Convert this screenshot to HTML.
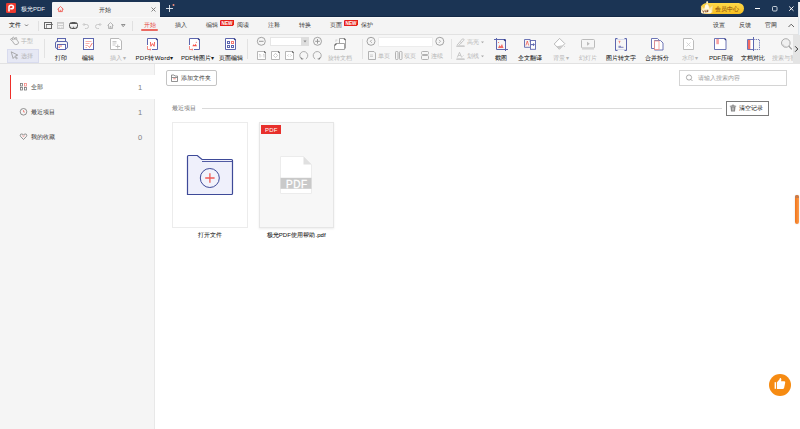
<!DOCTYPE html>
<html><head><meta charset="utf-8">
<style>
*{box-sizing:border-box}
html,body{margin:0;padding:0;width:800px;height:429px;overflow:hidden;background:#fff;font-family:"Liberation Sans",sans-serif;color:#222}
.a{position:absolute}
.t{position:absolute;font-size:6px;line-height:8px;white-space:nowrap;color:#333;-webkit-text-stroke:0}
.g{color:#b4b4b4}
.m{color:#3a3a3a}
.d{color:#1c1c1c;-webkit-text-stroke:0.06px #1c1c1c}
#ov{position:absolute;left:0;top:0;width:800px;height:429px;overflow:visible}
</style></head><body>
<!-- backgrounds -->
<div class="a" style="left:0;top:0;width:800px;height:17px;background:#1b3454"></div>
<div class="a" style="left:0;top:16px;width:798px;height:1px;background:#132845"></div>
<div class="a" style="left:52px;top:2px;width:108px;height:15px;background:#f4f4f4;border-radius:1px 1px 0 0"></div>
<div class="a" style="left:0;top:17px;width:798px;height:18px;background:#f4f4f4;border-bottom:1px solid #e2e2e2"></div>
<div class="a" style="left:0;top:17px;width:798px;height:1px;background:#fafafa"></div>
<div class="a" style="left:0;top:35px;width:798px;height:29px;background:#f6f6f6;border-bottom:1px solid #e2e2e2"></div>
<div class="a" style="left:798px;top:2px;width:2px;height:33px;background:#eef3f8;border-left:1px solid #dfe5ea"></div>
<div class="a" style="left:793px;top:35px;width:7px;height:29px;background:#e4e4e4"></div>
<div class="a" style="left:0;top:64px;width:155px;height:365px;background:#f5f5f5;border-right:1px solid #e8e8e8"></div>

<!-- title texts -->
<div class="t" style="left:21px;top:5px;color:#eef2f6">极光PDF</div>
<div class="t" style="left:99px;top:6px">开始</div>
<div class="a" style="left:701px;top:3px;width:43px;height:11px;border-radius:6px;background:linear-gradient(#ffd949,#f7bf20)"></div>
<div class="t" style="left:715px;top:5px;color:#8a4b0c;-webkit-text-stroke:0.05px">会员中心</div>

<!-- menu texts -->
<div class="t d" style="left:9px;top:21px">文件</div>
<div class="t" style="left:144px;top:21px;color:#e5463d">开始</div>
<div class="a" style="left:141px;top:29px;width:17px;height:2px;background:#ea6a62;border-radius:1px"></div>
<div class="t m" style="left:175px;top:21px">插入</div>
<div class="t m" style="left:206px;top:21px">编辑</div>
<svg class="a" style="left:220px;top:20px;position:absolute" width="14" height="6" viewBox="0 0 14 6"><path d="M0.8 0 H14 V4.6 L12.8 6 H0 V0.8 Z" fill="#e6201b"/><text x="7" y="5" text-anchor="middle" font-family="Liberation Sans" font-weight="bold" font-size="5.2" fill="#fff" textLength="11" lengthAdjust="spacingAndGlyphs">NEW</text></svg>
<div class="t m" style="left:237px;top:21px">阅读</div>
<div class="t m" style="left:268px;top:21px">注释</div>
<div class="t m" style="left:299px;top:21px">转换</div>
<div class="t m" style="left:330px;top:21px">页面</div>
<svg class="a" style="left:344px;top:20px;position:absolute" width="14" height="6" viewBox="0 0 14 6"><path d="M0.8 0 H14 V4.6 L12.8 6 H0 V0.8 Z" fill="#e6201b"/><text x="7" y="5" text-anchor="middle" font-family="Liberation Sans" font-weight="bold" font-size="5.2" fill="#fff" textLength="11" lengthAdjust="spacingAndGlyphs">NEW</text></svg>
<div class="t m" style="left:361px;top:21px">保护</div>
<div class="t m" style="left:713px;top:21px">设置</div>
<div class="t m" style="left:739px;top:21px">反馈</div>
<div class="t m" style="left:765px;top:21px">官网</div>

<!-- ribbon texts -->
<div class="a" style="left:7px;top:49px;width:32px;height:14px;background:#e6e8f4;border:1px solid #d8dbee"></div>
<div class="t g" style="left:21px;top:37px">手型</div>
<div class="t g" style="left:21px;top:52px">选择</div>
<div class="t d" style="left:55px;top:54px">打印</div>
<div class="t d" style="left:82px;top:54px">编辑</div>
<div class="t g" style="left:110px;top:54px">插入<span style="margin-left:0.8px">▾</span></div>
<div class="t d" style="left:135.5px;top:54px;letter-spacing:0.3px">PDF转Word▾</div>
<div class="t d" style="left:181px;top:54px">PDF转图片▾</div>
<div class="t d" style="left:219px;top:54px">页面编辑</div>
<div class="a" style="left:270px;top:37px;width:39px;height:9px;background:#fff;border:1px solid #e6e6e6"></div>
<div class="a" style="left:301px;top:37px;width:8px;height:9px;background:#dedede"></div>
<div class="t g" style="left:328px;top:54px">旋转文档</div>
<div class="a" style="left:378px;top:36.5px;width:55px;height:10px;background:#fff;border:1px solid #ececec;border-radius:1px"></div>
<div class="t g" style="left:378px;top:52px">单页</div>
<div class="t g" style="left:404px;top:52px">双页</div>
<div class="t g" style="left:431px;top:52px">连续</div>
<div class="t g" style="left:467px;top:38px">高亮</div>
<div class="t g" style="left:467px;top:52px">划线</div>
<div class="t d" style="left:495px;top:54px">截图</div>
<div class="t d" style="left:518px;top:54px">全文翻译</div>
<div class="t g" style="left:553px;top:54px">背景<span style="margin-left:0.8px">▾</span></div>
<div class="t g" style="left:579px;top:54px">幻灯片</div>
<div class="t d" style="left:606px;top:54px">图片转文字</div>
<div class="t d" style="left:645px;top:54px">合并拆分</div>
<div class="t g" style="left:682px;top:54px">水印<span style="margin-left:1px">▾</span></div>
<div class="t d" style="left:709px;top:54px">PDF压缩</div>
<div class="t d" style="left:741px;top:54px">文档对比</div>
<div class="t g" style="left:772px;top:54px;width:21px;overflow:hidden">搜索与替换</div>

<!-- sidebar -->
<div class="a" style="left:10px;top:75px;width:146px;height:24px;background:#fff;border-left:1.5px solid #ee2f2a"></div>
<div class="t" style="left:31px;top:83px">全部</div>
<div class="t" style="left:31px;top:108px">最近项目</div>
<div class="t" style="left:31px;top:133px">我的收藏</div>
<div class="t" style="left:138px;top:84px;color:#808080;font-size:7.5px">1</div>
<div class="t" style="left:138px;top:109px;color:#808080;font-size:7.5px">1</div>
<div class="t" style="left:138px;top:134px;color:#808080;font-size:7.5px">0</div>

<!-- main -->
<div class="a" style="left:166px;top:70px;width:51px;height:16px;border:1px solid #c4c4c4;border-radius:2px"></div>
<div class="t" style="left:181px;top:74px;color:#3a3a3a;-webkit-text-stroke:0">添加文件夹</div>
<div class="a" style="left:679px;top:70px;width:108px;height:16px;border:1px solid #d4d4d4"></div>
<div class="t" style="left:698px;top:74px;color:#9a9a9a;-webkit-text-stroke:0">请输入搜索内容</div>
<div class="t" style="left:172px;top:104px;color:#777;-webkit-text-stroke:0">最近项目</div>
<div class="a" style="left:202px;top:108px;width:520px;height:1px;background:#dadada"></div>
<div class="a" style="left:726px;top:101px;width:43px;height:15px;border:1px solid #7a7a7a"></div>
<div class="t" style="left:739px;top:104px;color:#333;-webkit-text-stroke:0.05px">清空记录</div>

<div class="a" style="left:172px;top:122px;width:76px;height:106px;border:1px solid #ececec;background:#fff"></div>
<div class="a" style="left:259px;top:122px;width:75px;height:106px;border:1px solid #e6e6e6;background:#f7f7f7;box-shadow:0 1px 2px rgba(0,0,0,0.08)"></div>
<div class="a" style="left:261px;top:125px;width:20px;height:9px;background:#e8302c"></div>
<div class="t" style="left:265px;top:125.5px;color:#fff;font-size:6px;letter-spacing:0.2px">PDF</div>
<div class="t d" style="left:198px;top:231px">打开文件</div>
<div class="t d" style="left:266.5px;top:231px;letter-spacing:0.1px">极光PDF使用帮助.pdf</div>

<div class="a" style="left:769px;top:374px;width:22px;height:22px;border-radius:50%;background:#f68b12"></div>
<div class="a" style="left:795px;top:195px;width:4px;height:29px;border-radius:2px;background:linear-gradient(90deg,#f0741a,#fb9a4a);box-shadow:0 0 2px rgba(0,0,0,0.15)"></div><div class="a" style="left:795px;top:195px;width:4px;height:3px;border-radius:2px 2px 0 0;background:#c87a4a"></div>

<svg id="ov" viewBox="0 0 800 429" fill="none" stroke-width="1">
<!-- logo -->
<rect x="6" y="3" width="10" height="10" rx="1.2" fill="#ec3a2f"/>
<path d="M9 11.5 V7 Q9 5.2 11.2 5.2 Q13.4 5.2 13.4 7 Q13.4 8.8 11.2 8.8 H10.2" stroke="#fff" stroke-width="1.6"/>
<!-- tab home -->
<path d="M57.4 9.4 L60.5 6.5 L63.6 9.4 M58.6 8.5 V11.6 H62.4 V8.5" stroke="#ee4a40" stroke-width="0.75"/><path d="M60.1 11.6 V10.2 H60.9 V11.6" stroke="#ee4a40" stroke-width="0.6"/>
<path d="M151.5 7.5 L155.5 11.5 M155.5 7.5 L151.5 11.5" stroke="#777" stroke-width="0.9"/>
<path d="M166 8.5 H173 M169.5 5 V12" stroke="#f0f3f7" stroke-width="0.85"/>
<circle cx="173.5" cy="5" r="1" fill="#f4907e"/>
<!-- window controls -->
<path d="M755 8.5 H760" stroke="#fff"/>
<rect x="772.5" y="6.5" width="4.5" height="4.5" rx="1" stroke="#eef2f6" stroke-width="0.8"/>
<path d="M789.2 6.5 L793.5 10.8 M793.5 6.5 L789.2 10.8" stroke="#fff"/>
<!-- crown -->
<path d="M701.6 12.8 L701.3 5.8 L704.2 8.2 L707.2 1.8 L709.8 7.6 L713 5 L712.4 12.8 Z" fill="#fbe7a2" stroke="#f2c34a" stroke-width="0.5"/>
<circle cx="707.2" cy="2.2" r="1" fill="#fff2c0"/>
<path d="M705 5.5 Q707 3.5 708.5 6 L709 9 H704.5 Z" fill="#fff9e6"/>
<rect x="701" y="9.6" width="10.5" height="3.8" rx="1.6" fill="#fff6dc"/>
<path d="M702.6 10.4 L703.5 12.4 L704.4 10.4 M705.6 10.4 V12.4 M706.9 12.4 V10.4 H708 Q708.9 10.8 708 11.5 H706.9" stroke="#7a3a0c" stroke-width="0.75"/>
<!-- menu row -->
<path d="M25 24.5 L26.5 26 L28 24.5" stroke="#555" stroke-width="0.8"/>
<path d="M38.5 21 V31 M132.5 21 V31" stroke="#e0e0e0"/>
<rect x="44.5" y="22.5" width="7" height="6" stroke="#666" stroke-width="1"/>
<path d="M46 24.5 H52.8" stroke="#666" stroke-width="1"/>
<path d="M46.5 25 V28" stroke="#666" stroke-width="0.7"/>
<rect x="57.5" y="22.5" width="6" height="6" stroke="#c9c9c9" stroke-width="1"/>
<path d="M58 23.3 H63 M58 25.5 H63" stroke="#cfcfcf" stroke-width="1"/>
<path d="M58.5 27.3 H59.8 M61.2 27.3 H62.5" stroke="#cfcfcf" stroke-width="1"/>
<rect x="69.5" y="22.5" width="8" height="6" rx="2.2" stroke="#555" stroke-width="1"/>
<path d="M70 23.5 H77 M70 27.3 H71.3 M72.7 27.3 H74.3 M75.7 27.3 H77" stroke="#555" stroke-width="1.1"/>
<path d="M84.5 23 L83 24.5 L84.5 26 M83.5 24.5 H86.5 Q88.5 24.5 88.5 26.5 Q88.5 28.5 86.5 28.5 H85" stroke="#c4c4c4" stroke-width="0.9"/>
<path d="M99.5 23 L101 24.5 L99.5 26 M100.5 24.5 H97.5 Q95.5 24.5 95.5 26.5 Q95.5 28.5 97.5 28.5 H99" stroke="#c4c4c4" stroke-width="0.9"/>
<path d="M107.5 25.5 L110.5 22.5 L113.5 25.5 M108.5 24.5 V28.5 H112.5 V24.5 M110 28.5 V26.5 H111 V28.5" stroke="#aaa" stroke-width="0.8"/>
<path d="M121.5 24.5 H125 L123.2 26.7 Z" stroke="#777" stroke-width="0.8"/>

<!-- ribbon: hand / select -->
<path d="M12.6 41.2 L10.8 39.9 Q10.2 39.1 11 38.6 Q11.5 38.4 12 38.8 L13.2 39.8 L12.6 37.9 Q12.6 37.1 13.4 37.1 Q13.9 37.2 14.1 37.7 L15 39.6 L15.3 38 Q15.6 37.3 16.3 37.5 Q16.8 37.8 16.7 38.4 L16.8 40.2 Q18.7 41.3 18.5 42.9 Q18 44.7 15.6 44.6 Q13.8 44.4 12.6 41.2 Z" stroke="#9a9a9a" stroke-width="0.8"/>
<path d="M11.2 51.8 L17.8 55.1 L15.3 55.9 L17.4 58.3 L16.6 59 L14.6 56.7 L13.1 58.5 Z" stroke="#9a9a9a" stroke-width="0.8"/>
<path d="M44.5 39 V58" stroke="#e2e2e2"/>
<!-- print -->
<rect x="57.5" y="38.5" width="8" height="3" stroke="#5d66ae"/>
<rect x="55.5" y="41.5" width="12" height="7" rx="1.5" stroke="#5d66ae"/>
<rect x="57.5" y="44.5" width="8" height="5" fill="#fff" stroke="#5d66ae"/>
<path d="M58.5 46 H62 M58.5 47.5 H60" stroke="#f26a62" stroke-width="0.8"/>
<!-- edit -->
<rect x="83.5" y="38.5" width="10" height="11" fill="#fff" stroke="#5d66ae"/>
<path d="M85.5 41.5 H91.5 M85.5 43.5 H89.5 M85.5 45.5 H88 M85.5 47.5 H87" stroke="#f47a72" stroke-width="0.6"/>
<path d="M88.3 46.2 L89.6 47.4 L92.3 43" stroke="#f26a62" stroke-width="0.9"/>
<!-- insert (gray) -->
<path d="M110.5 38.5 H119 L121.5 41 V49.5 H110.5 Z" fill="#fff" stroke="#b8b8b8"/>
<path d="M112.5 41.5 H116.5 M112.5 43 H116.5 M112.5 45 H115.5" stroke="#c8c8c8" stroke-width="1"/>
<path d="M115.5 46.5 H120 M117.7 44.5 V48.5" stroke="#b8b8b8" stroke-width="0.9"/>
<!-- pdf to word -->
<path d="M147.5 38.5 H156 L157.5 40 V49.5 H147.5 Z" fill="#fff"/>
<path d="M147.5 45 V38.5 H156 L157.5 40 V49.5 H152" stroke="#5d66ae"/>
<path d="M156 38.5 L157.5 40" stroke="#2a3380" stroke-width="1.3"/>
<path d="M150.4 42 L150.9 46.3 L152.5 43.6 L154.1 46.3 L154.6 42" stroke="#f5524a" stroke-width="0.9"/>
<path d="M147.5 46 V49.5 H151" stroke="#f47a72" stroke-width="0.9"/>
<path d="M149.8 50.6 L151 49.5 L149.8 48.4" stroke="#f47a72" stroke-width="0.6"/>
<!-- pdf to image -->
<path d="M189.5 38.5 H198 L199.5 40 V49.5 H189.5 Z" fill="#fff"/>
<path d="M189.5 45 V38.5 H198 L199.5 40 V49.5 H194" stroke="#5d66ae"/>
<path d="M198 38.5 L199.5 40" stroke="#2a3380" stroke-width="1.3"/>
<path d="M192.3 46.2 L193.5 44.2 L194.6 45.3 L195.6 43.8 L197 46.2 Z" fill="#f5524a"/>
<circle cx="196.3" cy="42.3" r="0.55" fill="#f5524a"/>
<path d="M189.5 46 V49.5 H193" stroke="#f47a72" stroke-width="0.9"/>
<path d="M191.8 50.6 L193 49.5 L191.8 48.4" stroke="#f47a72" stroke-width="0.6"/>
<!-- page edit -->
<path d="M225.5 38.5 H234 L235.5 40 V49.5 H225.5 Z" fill="#fff" stroke="#5d66ae"/>
<path d="M234 38.5 L235.5 40" stroke="#2a3380" stroke-width="1.3"/>
<rect x="227" y="41" width="3" height="3" fill="#5d66ae"/><rect x="228" y="42" width="1" height="1" fill="#fff"/>
<rect x="231" y="41" width="3" height="3" fill="#f47a72"/><rect x="232" y="42" width="1" height="1" fill="#fff"/>
<rect x="227" y="45" width="3" height="3" fill="#5d66ae"/><rect x="228" y="46" width="1" height="1" fill="#fff"/>
<rect x="231" y="45" width="3" height="3" fill="#5d66ae"/><rect x="232" y="46" width="1" height="1" fill="#fff"/>
<path d="M247.5 39 V59" stroke="#e2e2e2"/>
<!-- zoom controls -->
<circle cx="261.3" cy="41.3" r="4" stroke="#999" stroke-width="0.9"/>
<path d="M259 41.3 H263.6" stroke="#999"/>
<path d="M303.5 40.5 H306.5 L305 42.5 Z" fill="#888"/>
<circle cx="317.5" cy="41.3" r="4" stroke="#999" stroke-width="0.9"/>
<path d="M315.2 41.3 H319.8 M317.5 39 V43.6" stroke="#999"/>
<g stroke="#a4a4a4" stroke-width="0.8" fill="#fff">
<path d="M257.5 51.5 H264.3 L265.5 52.7 V59.5 H257.5 Z"/>
<path d="M271.5 51.5 H278.3 L279.5 52.7 V59.5 H271.5 Z"/>
<path d="M285.5 51.5 H292.3 L293.5 52.7 V59.5 H285.5 Z"/>
</g>
<path d="M264.2 51.5 L265.5 52.8 M278.2 51.5 L279.5 52.8 M292.2 51.5 L293.5 52.8" stroke="#555" stroke-width="1.1"/>
<path d="M259.3 54.5 L260 54 V57.5 M263.3 54.5 L264 54 V57.5" stroke="#b8b8b8" stroke-width="0.7"/>
<path d="M261.8 55 V55.4 M261.8 56.6 V57" stroke="#b8b8b8" stroke-width="0.6"/>
<path d="M275.5 53.3 L277.5 55.5 L275.5 57.7 L273.5 55.5 Z" stroke="#b4b4b4" stroke-width="0.7"/>
<path d="M288.6 54.5 L287.6 55.5 L288.6 56.5 M290.4 54.5 L291.4 55.5 L290.4 56.5" stroke="#b4b4b4" stroke-width="0.7"/>
<path d="M301.6 58.9 A4 4 0 1 1 305.8 59" stroke="#999" stroke-width="0.8"/>
<path d="M301 57.4 L301.6 59.1 L303.3 58.8" stroke="#666" stroke-width="0.8"/>
<path d="M319.4 58.9 A4 4 0 1 0 315.2 59" stroke="#999" stroke-width="0.8"/>
<path d="M320 57.4 L319.4 59.1 L317.7 58.8" stroke="#666" stroke-width="0.8"/>
<!-- rotate doc -->
<path d="M339.5 43.5 V38.5 H344 L345.5 40 V48.5" fill="#fff" stroke="#9a9a9a" stroke-width="0.9"/>
<path d="M344 38.5 L345.5 40" stroke="#666" stroke-width="1.2"/>
<path d="M336.5 43.5 H344.5 V49.5 H334.5 V45.5 Z" fill="#fff" stroke="#9a9a9a" stroke-width="0.9"/>
<path d="M334.5 45.5 L336.5 43.5" stroke="#666" stroke-width="1.2"/>
<path d="M335.8 42 V39.5 M336.8 39.2 V41" stroke="#c8c8c8" stroke-width="0.6"/>
<path d="M362.5 39 V59" stroke="#e2e2e2"/>
<!-- page nav -->
<circle cx="371" cy="41.3" r="4" stroke="#999" stroke-width="0.9"/>
<path d="M371.8 39.8 L370.3 41.3 L371.8 42.8" stroke="#999" stroke-width="0.8"/>
<circle cx="439.8" cy="41.3" r="4" stroke="#999" stroke-width="0.9"/>
<path d="M439 39.8 L440.5 41.3 L439 42.8" stroke="#999" stroke-width="0.8"/>
<path d="M368.5 51.5 H374 L375.5 53 V59.5 H368.5 Z" stroke="#aaa" stroke-width="0.9"/>
<path d="M370 55 H373 M370 56.5 H373" stroke="#bbb" stroke-width="0.6"/>
<rect x="395.5" y="51.5" width="2.5" height="8" rx="0.8" stroke="#aaa" stroke-width="0.9"/>
<rect x="399.5" y="51.5" width="2.5" height="8" rx="0.8" stroke="#aaa" stroke-width="0.9"/>
<rect x="421.5" y="51.5" width="7" height="3" rx="1" stroke="#aaa" stroke-width="0.9"/>
<rect x="421.5" y="55.5" width="7" height="4" rx="1" stroke="#aaa" stroke-width="0.9"/>
<path d="M451.5 39 V59" stroke="#e2e2e2"/>
<!-- highlight / underline -->
<path d="M457.2 45 L462.3 39 Q463 38.3 463.7 39 Q464.4 39.7 463.7 40.4 L459 45.2" stroke="#b9b9b9" stroke-width="0.8"/>
<path d="M460 41.5 L461.8 43.1" stroke="#b9b9b9" stroke-width="0.6"/>
<rect x="456.2" y="45.3" width="8.6" height="1.8" rx="0.9" fill="#cdcdcd"/>
<path d="M457.3 57.5 L459.5 52.3 L461.7 57.5" stroke="#bdbdbd" stroke-width="0.8"/>
<path d="M458.2 55.5 H460.8 M462.5 56.5 L463.5 55.5" stroke="#bdbdbd" stroke-width="0.7"/>
<rect x="456.2" y="58.3" width="8.6" height="1.8" rx="0.9" fill="#cdcdcd"/>
<path d="M481 41.5 H484 L482.5 43.2 Z M481 55.5 H484 L482.5 57.2 Z" fill="#aaa"/>
<!-- screenshot -->
<path d="M494 39.5 H505.5 V51 M496.5 38 V49.5 H508" stroke="#5d66ae"/>
<path d="M504 39.5 L505.5 41" stroke="#28307a" stroke-width="1.2"/>
<path d="M498 48 L499.5 45 L500.5 46.5 L502 44 L503.5 48 Z" fill="#f26a62"/>
<circle cx="498.5" cy="42.5" r="0.6" fill="#f26a62"/>
<!-- translate -->
<rect x="530.5" y="40.5" width="5" height="8.8" fill="#fff" stroke="#5d66ae" stroke-width="0.9"/>
<path d="M530 47.3 H524.5 V39.5 H530.2 V42" stroke="#5d66ae" stroke-width="0.9"/>
<path d="M525.9 45.5 L527.3 41 L528.7 45.5" stroke="#f04a40" stroke-width="0.7"/>
<path d="M530.8 44.6 H534" stroke="#5d66ae" stroke-width="1.1"/>
<path d="M533 43 L535 44.6 L533 46.2 Z" fill="#5d66ae"/>
<!-- background -->
<path d="M554.2 44 L559.6 38.4 L564.8 43.6 L559.4 49.3 Z" fill="#fff" stroke="#aaa" stroke-width="0.8"/>
<path d="M556.5 46.3 L563.2 45.2 L559.4 49 Z" fill="#c9c9c9"/>
<circle cx="564.6" cy="46.6" r="0.45" fill="#999"/>
<!-- slides -->
<rect x="581.5" y="39.5" width="13" height="8.5" rx="1" stroke="#bbb"/>
<path d="M587 41.8 V45.7 L589.8 43.75 Z" fill="#bbb"/>
<path d="M582 49 H594" stroke="#ccc" stroke-width="1"/>
<!-- image to text -->
<path d="M617.5 38.5 H615.5 V50.5 H617.5 M624.5 38.5 H626.5 V50.5 H624.5" stroke="#5d66ae" stroke-width="1"/>
<path d="M616 39.5 H626 M616 49.5 H626" stroke="#c5c9e6" stroke-width="0.6"/>
<path d="M618.5 41.3 H620.5 M619.5 41.3 V43.3" stroke="#f26a62" stroke-width="0.7"/>
<path d="M618.5 46.3 H621 M618.5 47.3 H623.5" stroke="#5d66ae" stroke-width="0.8"/>
<!-- merge split -->
<path d="M651.5 38.5 H657.5 L660 41 V48.5 H651.5 Z" fill="#fff" stroke="#5d66ae" stroke-width="0.9"/>
<path d="M654.5 40.5 H660.5 L663 43 V50 H654.5 Z" fill="#fff" stroke="#5d66ae" stroke-width="0.9"/>
<rect x="654.5" y="41" width="4.5" height="8.5" stroke="#f79790" stroke-width="0.8"/>
<!-- watermark -->
<path d="M683.5 38.5 H691.5 L693.5 40.5 V49.5 H683.5 Z" fill="#fff" stroke="#b4b4b4" stroke-width="0.9"/>
<path d="M686.5 42.5 L690.5 46.5 M690.5 42.5 L686.5 46.5" stroke="#ccc" stroke-width="0.8"/>
<!-- pdf compress -->
<path d="M714.5 38.5 H724.5 L726 40 V49.5 H714.5 Z" fill="#fff" stroke="#5d66ae" stroke-width="0.9"/>
<path d="M724.5 38.5 L726 40" stroke="#2a3380" stroke-width="1.2"/>
<rect x="716.3" y="39" width="2.6" height="5.2" fill="#f8a0a0"/>
<!-- compare -->
<path d="M753.5 39.5 H747.5 V49.5 H753.5" fill="#fff" stroke="#5d66ae" stroke-width="0.9"/>
<rect x="748" y="40" width="2.3" height="9" fill="#f26a62"/>
<path d="M753.5 39.5 H759.5 V49.5 H753.5" stroke="#5d66ae" stroke-width="0.9" stroke-dasharray="1.2 1"/>
<path d="M753.5 37 V51" stroke="#5d66ae" stroke-width="1"/>
<!-- search -->
<circle cx="785.8" cy="43" r="4.3" fill="#f0f0f0" stroke="#aaa" stroke-width="1"/>
<path d="M782.5 44 Q783 46.5 786 46.8" stroke="#ccc" stroke-width="1.2"/>
<path d="M788.8 46.2 L791.8 49.4" stroke="#999" stroke-width="1.2"/>
<path d="M795.2 46.3 L797.8 49 L795.2 51.7" stroke="#333" stroke-width="1"/>
<!-- menu right chevron -->
<path d="M788.5 27 L791.2 24.2 L794 27" stroke="#555" stroke-width="0.9"/>

<!-- sidebar icons -->
<g stroke="#777" stroke-width="0.8">
<rect x="20.5" y="83.5" width="2" height="2.5"/>
<rect x="20.5" y="87.5" width="2" height="2.5"/>
<rect x="24.5" y="87.5" width="2" height="2.5"/>
</g>
<rect x="24.5" y="83.5" width="2" height="2.5" stroke="#f58a84" stroke-width="0.8"/>
<circle cx="23.5" cy="111.8" r="3.3" stroke="#777" stroke-width="0.8"/>
<path d="M23.5 110 V112 H25" stroke="#f26a62" stroke-width="0.7"/>
<path d="M23.5 139.5 L20.6 136.5 Q19.8 135.3 20.6 134.3 Q21.8 133.3 23.5 134.8 Q25.2 133.3 26.4 134.3 Q27.2 135.3 26.4 136.5 Z" stroke="#777" stroke-width="0.8"/>

<path d="M22.3 135.6 L23.5 136.5 L24.7 135.6" stroke="#f47a72" stroke-width="0.7"/>
<!-- add folder icon -->
<path d="M171.5 81.5 V75 H174 L175 76 H177.5 V81.5 Z M171.5 77.5 H177.5" stroke="#777" stroke-width="0.8"/>
<path d="M173.3 78.8 H175.7" stroke="#f26a62" stroke-width="0.8"/>
<!-- search icon -->
<circle cx="689" cy="77.5" r="2.6" stroke="#8a8a8a" stroke-width="0.7"/>
<path d="M690.8 79.3 L692.5 81" stroke="#8a8a8a" stroke-width="0.7"/>
<!-- trash -->
<path d="M729.8 106.2 H736.2 M732 106 V105.2 H734 V106" stroke="#777" stroke-width="0.8"/><path d="M730.5 106.5 H735.5 L735 111.6 H731 Z" fill="#888"/><path d="M733 107.5 V110.5" stroke="#fff" stroke-width="0.8"/>

<!-- open file card folder -->
<path d="M187.5 194.5 V156.5 Q187.5 155.5 188.5 155.5 H197.3 L202 159.5 H231.5 Q232.5 159.5 232.5 160.5 V193.5 Q232.5 194.5 231.5 194.5 Z" fill="#eff0fb" stroke="#3e4a98" stroke-width="1.2"/>
<path d="M202 161.5 H232" stroke="#3e4a98" stroke-width="0.9"/>
<circle cx="209.8" cy="178" r="9.5" fill="#f2f3fc" stroke="#3e4a98" stroke-width="1"/>
<path d="M205.2 178 H214.6 M209.9 173.2 V182.8" stroke="#ef5b55" stroke-width="1.3"/>

<!-- pdf doc card -->
<path d="M280.5 156.5 H303.5 L311.5 164.5 V193.5 H280.5 Z" fill="#fff" stroke="#ececec" stroke-width="1"/>
<path d="M303.5 156.5 V164.5 H311.5 Z" fill="#e0e0e0"/>
<rect x="280.5" y="177.8" width="31" height="11" fill="#c9c9c9"/>

<!-- thumbs up -->
<rect x="774.6" y="382.2" width="1.5" height="6.6" fill="#fff"/>
<path d="M777 382.2 L779.4 379.4 Q779.8 377.6 780.8 378 Q781.8 378.8 781.1 381.2 H784.4 Q785.5 381.5 785.2 382.7 L784.1 388 Q783.7 388.9 782.7 388.9 H777 Z" fill="#fff"/>
</svg>
<div class="t" style="left:286px;top:178.5px;color:#fff;font-size:10px;line-height:11px;letter-spacing:0.6px;-webkit-text-stroke:0.3px #fff">PDF</div>
</body></html>
